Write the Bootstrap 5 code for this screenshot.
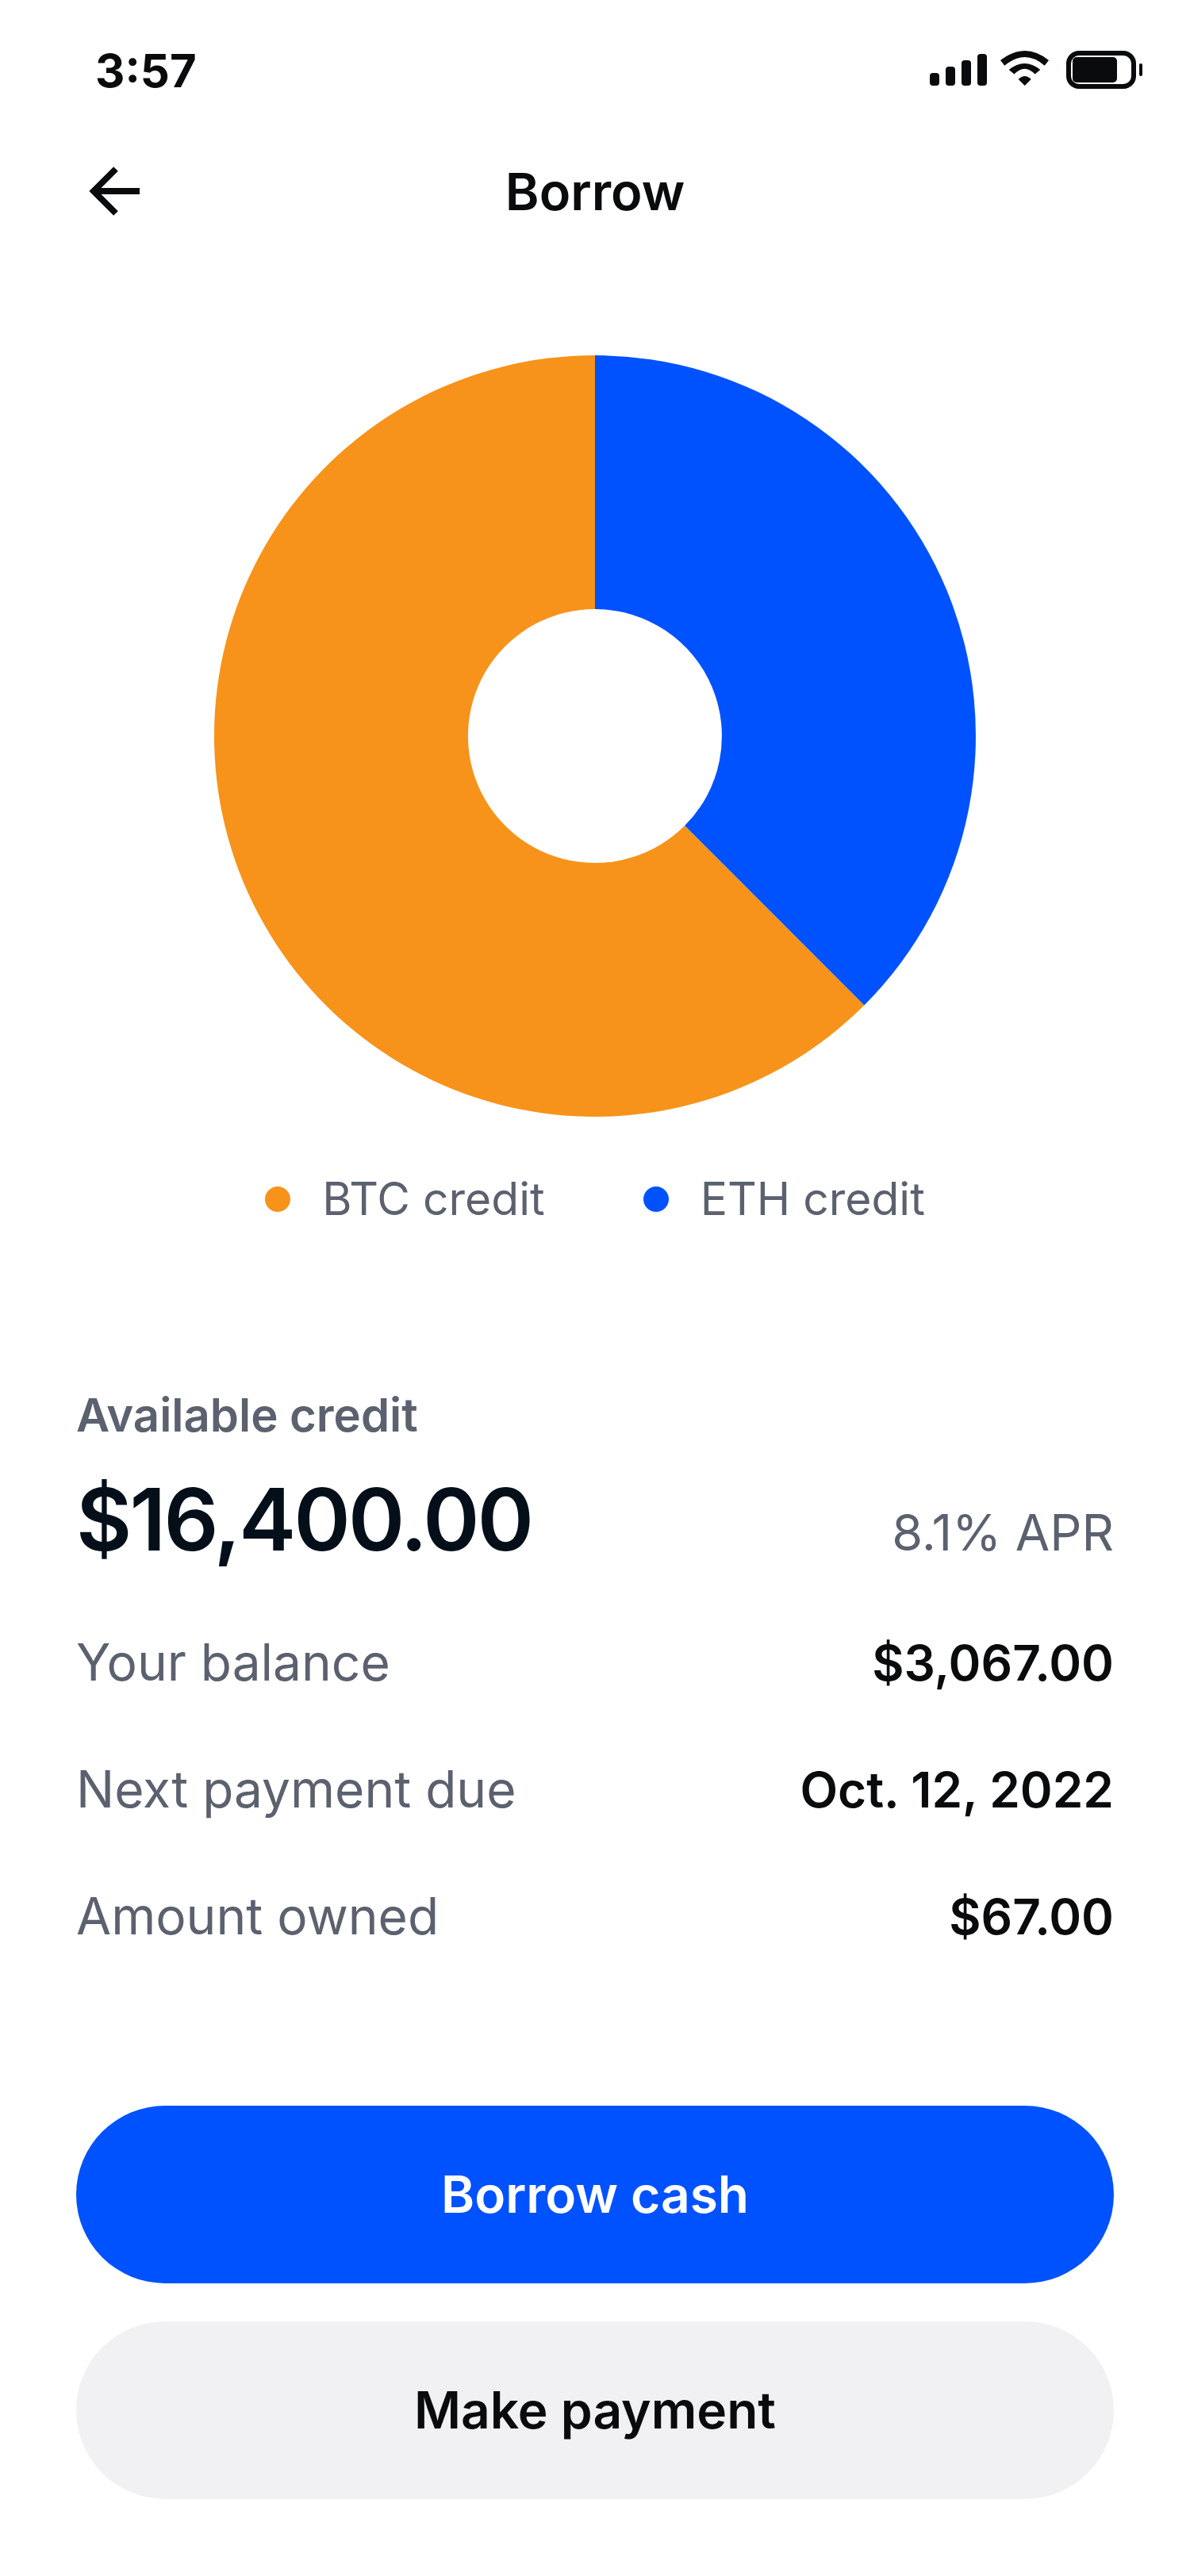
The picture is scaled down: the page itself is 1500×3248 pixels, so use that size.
<!DOCTYPE html>
<html lang="en">
<head>
    <meta charset="UTF-8" />
    <title>Borrow</title>
    <link href="https://cdn.jsdelivr.net/npm/bootstrap@5.3.3/dist/css/bootstrap.min.css" rel="stylesheet">
    <style>
        body { font-family: Inter, "Liberation Sans", sans-serif; color: #0a0b0d; background: #fff; }
        .phone { width: 1500px; height: 3248px; overflow: hidden; }
        .status-bar { height: 180px; padding: 64px 60px 0 120px; align-items: flex-start; }
        .status-time { font-size: 58px; font-weight: 700; line-height: 50px; }
        .status-icons { gap: 17px; }
        .status-wifi { margin-right: 4px; }
        .top-bar { height: 120px; padding: 2px 112px 0 112px; }
        .top-title { font-size: 65px; font-weight: 600; line-height: 1; }
        .top-spacer { width: 64px; }
        .chart-wrap { padding-top: 148px; }
        .chart-legend { margin-top: 72px; height: 64px; gap: 124px; font-size: 57px; color: #5b616e; }
        .legend-item { gap: 40px; }
        .legend-dot { width: 32px; height: 32px; border-radius: 50%; }
        .dot-btc { background: #f7931a; }
        .dot-eth { background: #0052ff; }
        .credit-block { padding: 0 96px; margin-top: 208px; }
        .credit-label { font-size: 58px; font-weight: 600; color: #5b616e; line-height: 64px; margin-bottom: 35px; }
        .credit-amount { font-size: 108px; font-weight: 600; color: #050f19; line-height: 130px; letter-spacing: -2.7px; }
        .credit-apr { font-size: 63px; color: #5b616e; line-height: 1; }
        .credit-head { margin-bottom: 35px; }
        .info-row { font-size: 64px; height: 160px; color: #5b616e; }
        .info-row strong { font-size: 62px; font-weight: 600; color: #0a0b0d; }
        .action-btn { height: 224px; border-radius: 112px; font-size: 64px; font-weight: 600; border: 0; }
        .btn-borrow { background: #0052ff; color: #fff; }
        .btn-pay { background: #f1f1f3; color: #0a0b0d; }
        .action-group { padding: 0 96px; gap: 48px; margin-top: 159px; }
    </style>
</head>
<body>
    <div class="phone d-flex flex-column">
        <!-- Status bar -->
        <div class="status-bar d-flex justify-content-between">
            <span class="status-time">3:57</span>
            <div class="status-icons d-flex align-items-start">
                <svg width="72" height="40" viewBox="0 0 72 40" fill="#0a0b0d" class="mt-1">
                    <rect x="0" y="24" width="12" height="16" rx="4"/>
                    <rect x="20" y="16" width="12" height="24" rx="4"/>
                    <rect x="40" y="8" width="12" height="32" rx="4"/>
                    <rect x="60" y="0" width="12" height="40" rx="4"/>
                </svg>
                <svg width="62" height="44" viewBox="0 0 62 44" fill="#0a0b0d" class="status-wifi">
                    <path d="M0 12Q31-12 61 12L55.7 18.7Q31-2.7 5.3 18.7Z"/>
                    <path d="M10.7 24Q30.5 8 50.3 24L43.5 29.5Q30.5 15.9 17.5 29.5Z"/>
                    <path d="M22.7 36Q30.7 28 38.7 36L30.7 44Z"/>
                </svg>
                <svg width="96" height="48" viewBox="0 0 96 48" fill="#0a0b0d">
                    <rect x="3" y="3" width="82" height="42" rx="13" fill="none" stroke="#0a0b0d" stroke-width="6"/>
                    <rect x="8" y="8" width="56" height="32" rx="5"/>
                    <rect x="92" y="16" width="4" height="16" rx="2"/>
                </svg>
            </div>
        </div>

        <!-- Header -->
        <div class="top-bar d-flex justify-content-between align-items-center">
            <svg width="64" height="62" viewBox="0 0 64 62" fill="none" stroke="#0a0b0d" stroke-width="8">
                <path d="M34 3L6 31L34 59M6 31H64"/>
            </svg>
            <span class="top-title">Borrow</span>
            <span class="top-spacer"></span>
        </div>

        <!-- Chart -->
        <div class="chart-wrap text-center">
            <svg width="960" height="960" viewBox="0 0 960 960" class="d-block mx-auto">
                <path fill="#f7931a" d="M819.4 819.4A480 480 0 1 1 480 0V320A160 160 0 1 0 593.1 593.1Z"/>
                <path fill="#0052ff" d="M480 0A480 480 0 0 1 819.4 819.4L593.1 593.1A160 160 0 0 0 480 320Z"/>
            </svg>
            <div class="chart-legend d-flex justify-content-center align-items-center">
                <div class="legend-item d-flex align-items-center"><span class="legend-dot dot-btc"></span><span>BTC credit</span></div>
                <div class="legend-item d-flex align-items-center"><span class="legend-dot dot-eth"></span><span>ETH credit</span></div>
            </div>
        </div>

        <!-- Credit details -->
        <div class="credit-block">
            <div class="credit-label">Available credit</div>
            <div class="credit-head d-flex justify-content-between align-items-baseline">
                <span class="credit-amount">$16,400.00</span>
                <span class="credit-apr">8.1% APR</span>
            </div>
            <div class="info-row d-flex justify-content-between align-items-center"><span>Your balance</span><strong>$3,067.00</strong></div>
            <div class="info-row d-flex justify-content-between align-items-center"><span>Next payment due</span><strong>Oct. 12, 2022</strong></div>
            <div class="info-row d-flex justify-content-between align-items-center"><span>Amount owned</span><strong>$67.00</strong></div>
        </div>

        <!-- Actions -->
        <div class="action-group d-flex flex-column">
            <button class="btn action-btn btn-borrow">Borrow cash</button>
            <button class="btn action-btn btn-pay">Make payment</button>
        </div>
    </div>
    <script src="https://cdn.jsdelivr.net/npm/bootstrap@5.3.3/dist/js/bootstrap.bundle.min.js"></script>
</body>
</html>
